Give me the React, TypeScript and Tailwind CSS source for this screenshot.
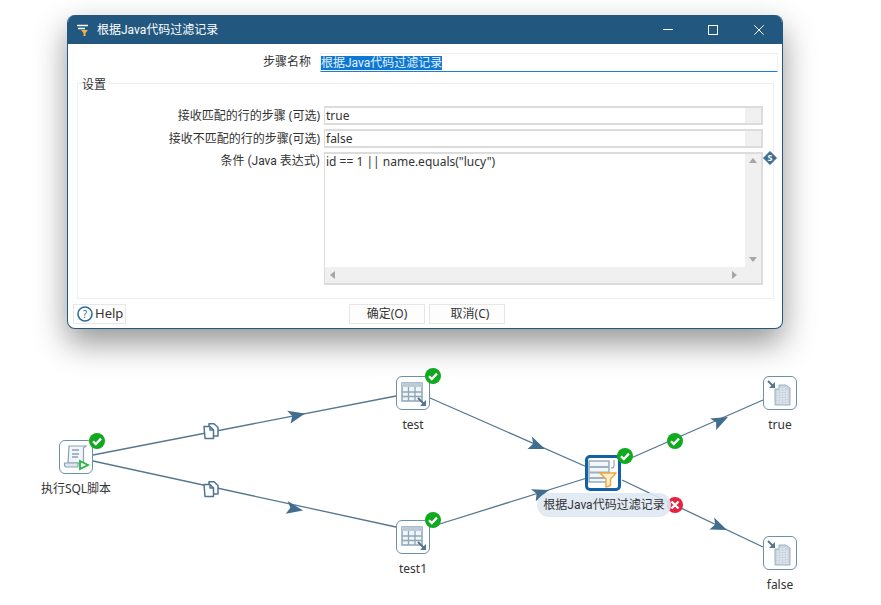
import React from 'react';

const EDGE = '#55778f';

// small arrow head, tip sits on (x, y) and points along angle
const Arrow = ({ x, y, angle }: { x: number; y: number; angle: number }) => (
  <path d="M0 0L-17 -6L-13 0L-16 7Z" fill="#416d8e" transform={`translate(${x} ${y}) rotate(${angle})`} />
);

const CopyIcon = ({ x, y }: { x: number; y: number }) => (
  <g transform={`translate(${x} ${y})`} fill="#fff" stroke="#4f7592" strokeWidth="1.5" strokeLinejoin="round">
    <path d="M6 0.8H11L15 4.5V13H6Z" />
    <path d="M1 3.5H7L10.5 7V15.5H2Z" />
    <path d="M7 3.5V7H10.5" fill="none" />
  </g>
);

const Check = ({ x, y }: { x: number; y: number }) => (
  <g transform={`translate(${x} ${y})`}>
    <circle r="8" fill="#10a91f" />
    <path d="M-4 0.2L-1.2 3L4 -2.4" fill="none" stroke="#fff" strokeWidth="2.3" />
  </g>
);

const TableIcon = () => (
  <svg width="28" height="28" viewBox="0 0 28 28">
    <rect x="3" y="4" width="20" height="18" fill="#f1f5f8" stroke="#8fa6b8" strokeWidth="1.5" />
    <rect x="3" y="4" width="20" height="4" fill="#bccbd7" />
    <path d="M3 13H23M3 17.5H23M9.5 8V22M16 8V22" stroke="#8fa6b8" strokeWidth="1.3" />
    <path d="M19 19L25 25" stroke="#55778f" strokeWidth="2" />
    <path d="M27 21V27H21Z" fill="#55778f" />
  </svg>
);

const OutputIcon = () => (
  <svg width="28" height="28" viewBox="0 0 28 28">
    <path d="M9 10H13V6H20L24 9V26H9Z" fill="#c9d6e0" stroke="#9db1c1" strokeWidth="1" />
    <path d="M12 12V25M15 9V25M18 9V25M21 11V25" stroke="#eef3f6" strokeWidth="1.2" strokeDasharray="1.5 1" />
    <path d="M2 2L7 7" stroke="#55778f" strokeWidth="2" />
    <path d="M9 3V9H3Z" fill="#55778f" />
  </svg>
);

const SqlIcon = () => (
  <svg width="28" height="28" viewBox="0 0 28 28">
    <path d="M7 3H24L21.5 5V20H6Z" fill="#f2f5f8" stroke="#8aa2b5" strokeWidth="1.2" />
    <path d="M2.5 20H16V24H4.5Q2 24 2.5 20Z" fill="#dfe7ee" stroke="#8aa2b5" strokeWidth="1.2" />
    <path d="M10 7H17M10 11H17M10 14H16" stroke="#8aa2b5" strokeWidth="1.4" />
    <path d="M18 18L26 22L18 26Z" fill="#fff" stroke="#22b83a" strokeWidth="1.8" />
  </svg>
);

const FilterIcon = () => (
  <svg width="30" height="30" viewBox="0 0 30 30">
    <rect x="1" y="3" width="20" height="21" fill="#f3f6f8" stroke="#8fa6b8" strokeWidth="1.4" />
    <path d="M1 9H21M1 14.5H21M1 20H21" stroke="#9db1c1" strokeWidth="1.8" />
    <path d="M12 15H28L22.5 21V27.5L18 29V21Z" fill="#fff1d6" stroke="#f4a63c" strokeWidth="1.5" strokeLinejoin="round" />
    <path d="M26 2V8Q26 10 23 10" fill="none" stroke="#8ba3b6" strokeWidth="1.1" />
  </svg>
);

const Node = ({ x, y, label, selected, children }: { x: number; y: number; label?: string; selected?: boolean; children: React.ReactNode }) => (
  <div className="absolute flex w-[34px] flex-col items-center" style={{ left: x, top: y }}>
    <div className={selected
      ? 'flex h-[36px] w-[36px] shrink-0 items-center justify-center rounded-[5px] border-[3px] border-[#1360a6] bg-white'
      : 'flex h-[34px] w-[34px] shrink-0 items-center justify-center rounded-[6px] border border-[#6f90a9] bg-white'}>
      {children}
    </div>
    {label && <span className="mt-[7px] whitespace-nowrap text-[12px] leading-[16px] text-[#333]">{label}</span>}
  </div>
);

const ScrollArrow = ({ dir }: { dir: 'up' | 'down' | 'left' | 'right' }) => {
  const d = { up: 'M0 6L4 1L8 6Z', down: 'M0 1H8L4 6Z', left: 'M6 0V8L1 4Z', right: 'M1 0V8L6 4Z' }[dir];
  return <svg width="8" height="8" viewBox="0 0 8 8"><path d={d} fill="#a6a6a6" /></svg>;
};

const TextRow = ({ label, value }: { label: string; value: string }) => (
  <div className="flex h-[19px] items-center gap-[4px]">
    <span className="w-[242px] whitespace-nowrap text-right">{label}</span>
    <div className="flex h-[19px] w-[439px] border-2 border-l-0 border-[#dcdcdc]">
      <div className="flex-1 border-l border-[#dcdcdc] pl-[1px] leading-[16px]">{value}</div>
      <div className="w-[16px] bg-[#f0f0f0]" />
    </div>
  </div>
);

const JAVA_FONT = "font-['Roboto','Noto_Sans_CJK_SC',sans-serif]";

export default function App() {
  return (
    <div className="relative h-[605px] w-[881px] overflow-hidden bg-white pl-[67px] pt-[15px] font-['Noto_Sans','Noto_Sans_CJK_SC',sans-serif] text-[12px] text-[#333]">
      {/* canvas edges */}
      <svg className="absolute left-0 top-0" width="881" height="605" viewBox="0 0 881 605">
        <g stroke={EDGE} strokeWidth="1.3" fill="none">
          <path d="M93 455L396 396" />
          <path d="M93 461L396 527" />
          <path d="M430 398L587 467" />
          <path d="M430 527L587 478" />
          <path d="M622 462L763 400" />
          <path d="M622 480L763 547" />
        </g>
        <Arrow x={305} y={413.5} angle={-11} />
        <Arrow x={303} y={510.5} angle={12.5} />
        <Arrow x={545} y={449} angle={24} />
        <Arrow x={549} y={490} angle={-17} />
        <Arrow x={728} y={417} angle={-24} />
        <Arrow x={727} y={530} angle={25} />
        <CopyIcon x={203} y={423} />
        <CopyIcon x={203} y={481} />
        <Check x={675} y={441} />
      </svg>

      <Node x={59} y={440} label="执行SQL脚本"><SqlIcon /></Node>
      <Node x={396} y={376} label="test"><TableIcon /></Node>
      <Node x={396} y={520} label="test1"><TableIcon /></Node>
      <Node x={763} y={376} label="true"><OutputIcon /></Node>
      <Node x={763} y={536} label="false"><OutputIcon /></Node>
      <Node x={586} y={455} selected><FilterIcon /></Node>

      {/* status badges */}
      <svg className="absolute left-0 top-0" width="881" height="605" viewBox="0 0 881 605">
        <Check x={97} y={441} />
        <Check x={433} y={376} />
        <Check x={433} y={520} />
        <Check x={625} y={456} />
        <g transform="translate(675 505)">
          <circle r="8" fill="#e9203f" />
          <path d="M-3.5 -3.5L3.5 3.5M3.5 -3.5L-3.5 3.5" stroke="#fff" strokeWidth="2.4" />
        </g>
      </svg>
      <div className={`absolute left-[537px] top-[493px] flex h-[24px] w-[134px] items-center justify-center rounded-full bg-[#dfe8f2]/90 text-[#333] ${JAVA_FONT}`}>根据Java代码过滤记录</div>

      {/* dialog */}
      <div className="relative z-10 flex h-[314px] w-[716px] flex-col overflow-hidden rounded-[8px] border-x border-b border-[#22587f] bg-white shadow-[0_14px_32px_rgba(0,0,0,0.42)]">
        <div className="-mx-px flex h-[29px] shrink-0 items-center bg-[#22587f] pl-[10px] text-white">
          <svg width="12" height="12" viewBox="0 0 12 12" className="mr-[8px]">
            <path d="M0 1.5H11M1 4.5H8" stroke="#fff" strokeWidth="1.5" />
            <path d="M4 6H11L8.5 9V12H6.5V9Z" fill="#f4b04a" />
          </svg>
          <span className={JAVA_FONT}>根据Java代码过滤记录</span>
          <div className="ml-auto flex items-center">
            <div className="mr-[35px] h-px w-[10px] bg-white" />
            <div className="mr-[36px] h-[10px] w-[10px] border border-white" />
            <svg width="10" height="10" viewBox="0 0 10 10" className="mr-[19px]">
              <path d="M0.3 0.3L9.7 9.7M9.7 0.3L0.3 9.7" stroke="#fff" strokeWidth="1" />
            </svg>
          </div>
        </div>

        <div className="mt-[9px] flex h-[18px] shrink-0 items-center gap-[9px]">
          <span className="w-[243px] text-right">步骤名称</span>
          <div className="h-[19px] w-[458px] border border-[#f0f0f0] border-b-[#1a7fd6] leading-[17px]">
            <span className={`bg-[#0d78d4] text-[#e6f1fa] ${JAVA_FONT}`}>根据Java代码过滤记录</span>
          </div>
        </div>

        <div className="relative ml-[9px] mt-[12px] flex h-[216px] w-[697px] shrink-0 flex-col gap-[4px] border border-[#eeeeee] pt-[22px]">
          <span className="absolute left-[4px] top-[-7px] bg-white pr-[2px] leading-[16px]">设置</span>
          <TextRow label="接收匹配的行的步骤 (可选)" value="true" />
          <TextRow label="接收不匹配的行的步骤(可选)" value="false" />
          <div className="flex h-[133px] gap-[4px]">
            <span className={`w-[242px] whitespace-nowrap text-right leading-[18px] ${JAVA_FONT}`}>条件 (Java 表达式)</span>
            <div className="relative flex w-[439px] flex-col border-2 border-l border-[#dcdcdc]">
              <div className="flex min-h-0 flex-1">
                <div className="flex-1 pl-[1px] leading-[16px]">{'id == 1 || name.equals("lucy")'}</div>
                <div className="flex w-[16px] flex-col items-center justify-between bg-[#f0f0f0] py-[3px]">
                  <ScrollArrow dir="up" />
                  <ScrollArrow dir="down" />
                </div>
              </div>
              <div className="flex h-[16px] items-center justify-between bg-[#f0f0f0] pl-[4px] pr-[22px]">
                <ScrollArrow dir="left" />
                <ScrollArrow dir="right" />
              </div>
              <svg width="14" height="14" viewBox="0 0 14 14" className="absolute right-[-16px] top-[-3px]">
                <path d="M7 0.5L13.5 7L7 13.5L0.5 7Z" fill="#3e6d91" stroke="#3e6d91" strokeLinejoin="round" />
                <text x="7" y="10" textAnchor="middle" fontSize="9" fontWeight="700" fill="#fff">S</text>
              </svg>
            </div>
          </div>
        </div>

        <div className="mt-[5px] flex h-[20px] shrink-0 items-center">
          <button className="ml-[5px] flex h-[20px] w-[53px] items-center gap-[2px] border border-[#e8e8e8] bg-white pl-[3px] text-[13px]">
            <svg width="16" height="16" viewBox="0 0 16 16">
              <circle cx="8" cy="8" r="7" fill="#fff" stroke="#2f6f9f" strokeWidth="1.6" />
              <text x="8" y="11.5" textAnchor="middle" fontSize="10" fill="#2f6f9f">?</text>
            </svg>
            Help
          </button>
          <button className="ml-[223px] h-[20px] w-[76px] border border-[#e6e6e6] bg-[#fdfdfd]">确定(O)</button>
          <button className="ml-[4px] h-[20px] w-[76px] border border-[#e6e6e6] bg-[#fdfdfd] pl-[6px]">取消(C)</button>
        </div>
      </div>
    </div>
  );
}
